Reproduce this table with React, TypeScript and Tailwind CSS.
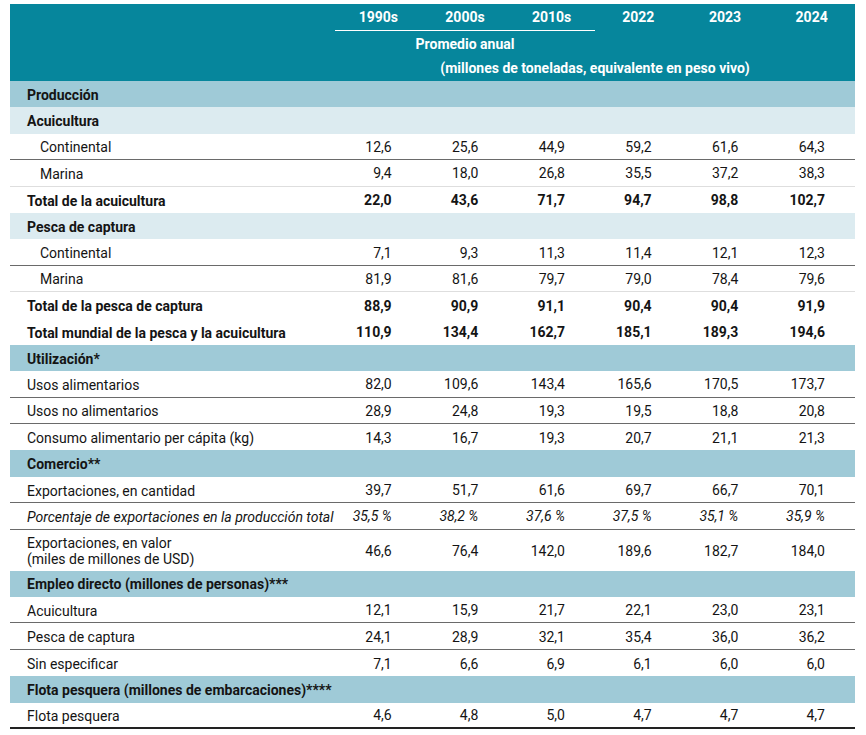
import React from "react";

type Row =
  | { kind: "band"; label: string }
  | { kind: "sub"; label: string }
  | {
      kind: "row";
      label: string | string[];
      values: string[];
      indent?: boolean;
      bold?: boolean;
      italic?: boolean;
      line?: "dark" | "light" | "none" | "bottom";
      tall?: boolean;
    };

const rows: Row[] = [
  { kind: "band", label: "Producción" },
  { kind: "sub", label: "Acuicultura" },
  { kind: "row", label: "Continental", indent: true, values: ["12,6", "25,6", "44,9", "59,2", "61,6", "64,3"], line: "dark" },
  { kind: "row", label: "Marina", indent: true, values: ["9,4", "18,0", "26,8", "35,5", "37,2", "38,3"], line: "light" },
  { kind: "row", label: "Total de la acuicultura", bold: true, values: ["22,0", "43,6", "71,7", "94,7", "98,8", "102,7"], line: "none" },
  { kind: "sub", label: "Pesca de captura" },
  { kind: "row", label: "Continental", indent: true, values: ["7,1", "9,3", "11,3", "11,4", "12,1", "12,3"], line: "dark" },
  { kind: "row", label: "Marina", indent: true, values: ["81,9", "81,6", "79,7", "79,0", "78,4", "79,6"], line: "light" },
  { kind: "row", label: "Total de la pesca de captura", bold: true, values: ["88,9", "90,9", "91,1", "90,4", "90,4", "91,9"], line: "none" },
  { kind: "row", label: "Total mundial de la pesca y la acuicultura", bold: true, values: ["110,9", "134,4", "162,7", "185,1", "189,3", "194,6"], line: "none" },
  { kind: "band", label: "Utilización*" },
  { kind: "row", label: "Usos alimentarios", values: ["82,0", "109,6", "143,4", "165,6", "170,5", "173,7"], line: "dark" },
  { kind: "row", label: "Usos no alimentarios", values: ["28,9", "24,8", "19,3", "19,5", "18,8", "20,8"], line: "dark" },
  { kind: "row", label: "Consumo alimentario per cápita (kg)", values: ["14,3", "16,7", "19,3", "20,7", "21,1", "21,3"], line: "none" },
  { kind: "band", label: "Comercio**" },
  { kind: "row", label: "Exportaciones, en cantidad", values: ["39,7", "51,7", "61,6", "69,7", "66,7", "70,1"], line: "dark" },
  { kind: "row", label: "Porcentaje de exportaciones en la producción total", italic: true, values: ["35,5 %", "38,2 %", "37,6 %", "37,5 %", "35,1 %", "35,9 %"], line: "dark" },
  { kind: "row", label: ["Exportaciones, en valor", "(miles de millones de USD)"], tall: true, values: ["46,6", "76,4", "142,0", "189,6", "182,7", "184,0"], line: "none" },
  { kind: "band", label: "Empleo directo (millones de personas)***" },
  { kind: "row", label: "Acuicultura", values: ["12,1", "15,9", "21,7", "22,1", "23,0", "23,1"], line: "dark" },
  { kind: "row", label: "Pesca de captura", values: ["24,1", "28,9", "32,1", "35,4", "36,0", "36,2"], line: "dark" },
  { kind: "row", label: "Sin especificar", values: ["7,1", "6,6", "6,9", "6,1", "6,0", "6,0"], line: "none" },
  { kind: "band", label: "Flota pesquera (millones de embarcaciones)****" },
  { kind: "row", label: "Flota pesquera", values: ["4,6", "4,8", "5,0", "4,7", "4,7", "4,7"], line: "bottom" },
];

const gridCols = "grid grid-cols-[325px_repeat(6,minmax(0,1fr))]";

export default function App() {
  return (
    <div
      className="w-[866px] h-[735px] bg-white pt-[4px] pl-[10px] text-[#141414] text-[14px]"
      style={{ fontFamily: "Roboto, 'Liberation Sans', sans-serif" }}
    >
      <div className="w-[845px]">
        {/* Header */}
        <div className="bg-[#06869c] text-white font-bold">
          <div className={`${gridCols} h-[26px] items-center`}>
            <div />
            {["1990s", "2000s", "2010s", "2022", "2023", "2024"].map((y) => (
              <div key={y} className="text-center">
                {y}
              </div>
            ))}
          </div>
          <div className={`${gridCols} h-[27px]`}>
            <div />
            <div className="col-span-3 border-t border-white flex items-center justify-center">
              Promedio anual
            </div>
          </div>
          <div className={`${gridCols} h-[24px] items-center`}>
            <div />
            <div className="col-span-6 text-center leading-[18px] pb-[2px]">
              (millones de toneladas, equivalente en peso vivo)
            </div>
          </div>
        </div>

        {rows.map((r, i) => {
          if (r.kind === "band") {
            return (
              <div key={i} className="h-[26.4px] bg-[#9fcad7] flex items-center pl-[17px] pt-[2px] font-bold">
                {r.label}
              </div>
            );
          }
          if (r.kind === "sub") {
            return (
              <div key={i} className="h-[26.4px] bg-[#dcebf0] flex items-center pl-[17px] pt-[2px] font-bold">
                {r.label}
              </div>
            );
          }
          const lineCls =
            r.line === "dark"
              ? "border-b-[1.5px] border-[#6a6a6a]"
              : r.line === "light"
              ? "border-b border-[#dedede]"
              : r.line === "bottom"
              ? "border-b-2 border-[#222]"
              : "";
          const h = r.tall ? "h-[41px]" : "h-[26.4px]";
          return (
            <div
              key={i}
              className={`${gridCols} ${h} items-center pt-[2px] ${lineCls} ${r.bold ? "font-bold" : ""} ${r.italic ? "italic" : ""}`}
            >
              <div className={`${r.indent ? "pl-[30px]" : "pl-[17px]"} leading-[16px]`}>
                {Array.isArray(r.label) ? r.label.map((l) => <div key={l}>{l}</div>) : r.label}
              </div>
              {r.values.map((v, j) => (
                <div key={j} className="text-right pr-[30px]">
                  {v}
                </div>
              ))}
            </div>
          );
        })}
      </div>
    </div>
  );
}
